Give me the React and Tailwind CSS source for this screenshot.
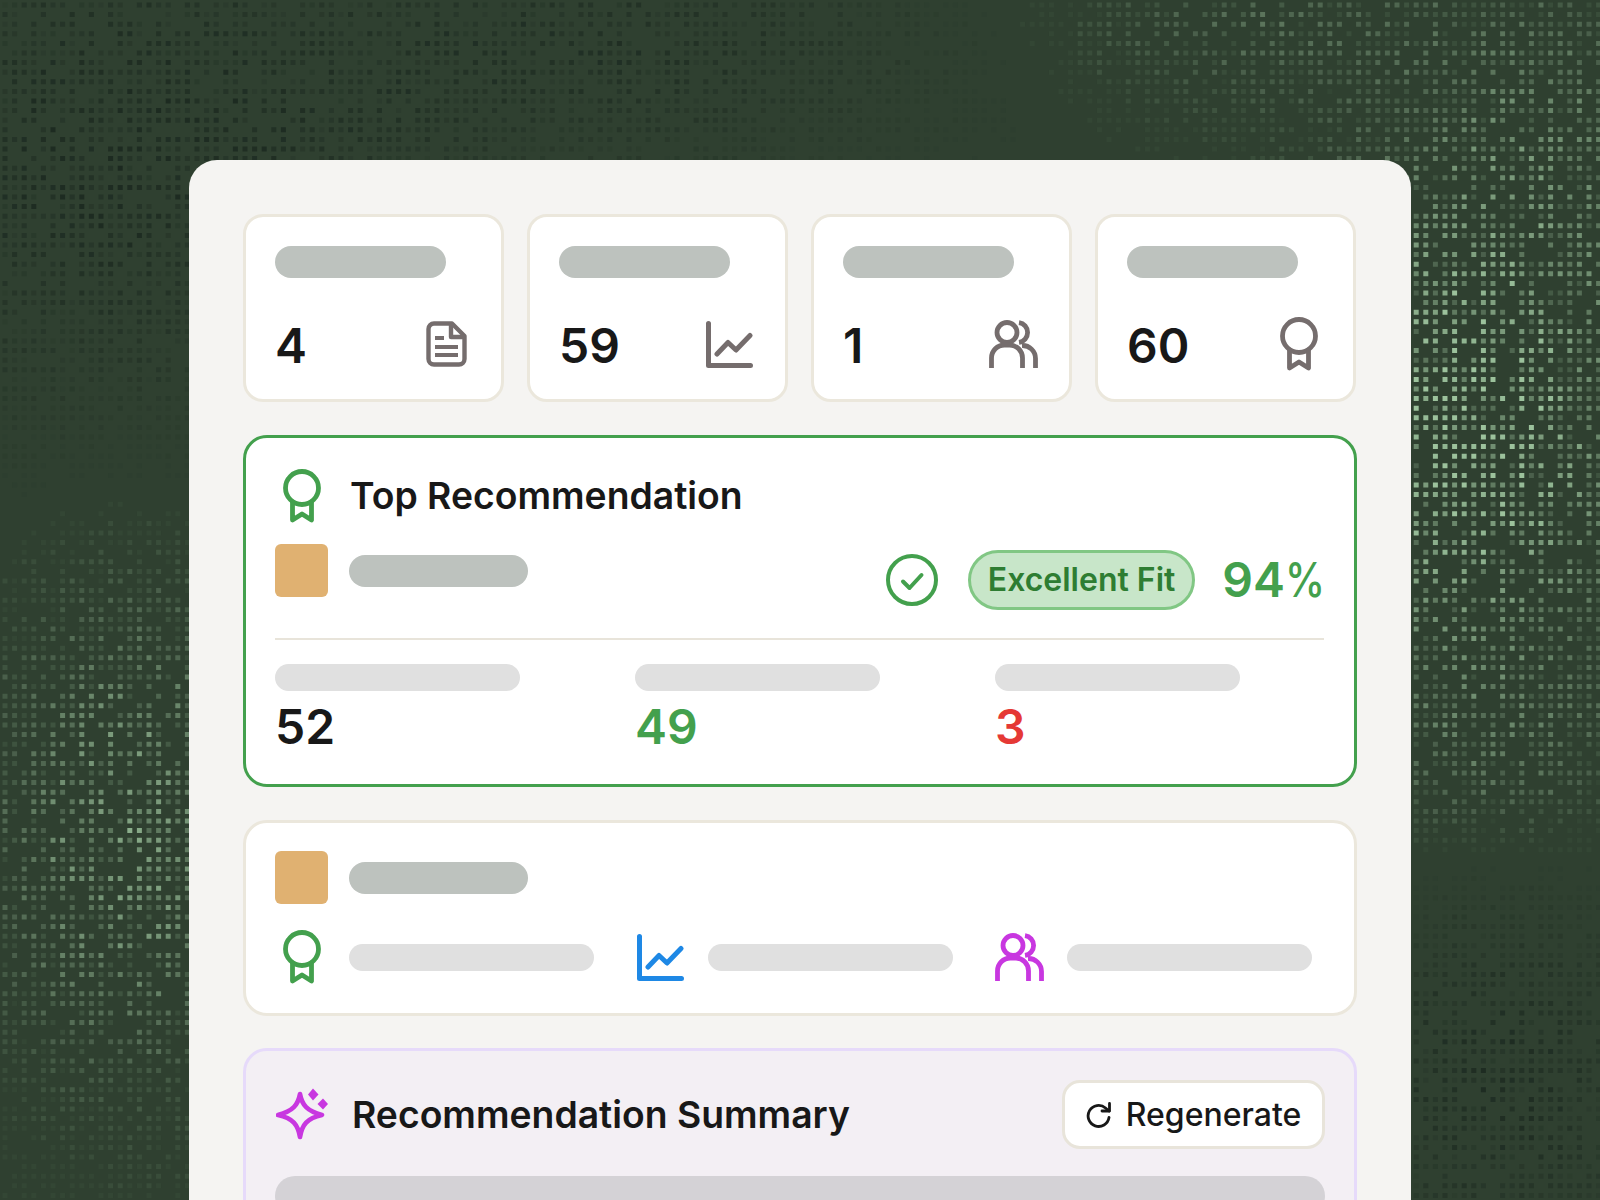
import { useMemo } from "react";

const ink = "text-[#181818]";
const fontInter = "font-['Inter',sans-serif]";

function rand(i, j) {
    const s = Math.sin(i * 127.1 + j * 311.7) * 43758.5453;
    return s - Math.floor(s);
}

// soft blob, 1 at the center and fading out
function blob(x, y, cx, cy, rx, ry) {
    const d = ((x - cx) / rx) ** 2 + ((y - cy) / ry) ** 2;
    return Math.exp(-d * 1.6);
}

// above 0 the dot is lighter than the ground, below 0 darker
function dotTone(x, y) {
    const light =
        blob(x, y, 130, 830, 170, 300) * 0.68 +
        blob(x, y, 1470, 430, 200, 330) * 1.0 +
        blob(x, y, 1240, 20, 280, 120) * 0.3 +
        blob(x, y, 1560, 120, 160, 200) * 0.3 +
        blob(x, y, 1500, 760, 200, 110) * 0.25;
    const dark =
        blob(x, y, 120, 160, 420, 300) * 0.6 +
        blob(x, y, 650, 50, 380, 130) * 0.42 +
        blob(x, y, 1500, 1080, 180, 230) * 0.55;
    return light - dark;
}

function DotField() {
    const groups = useMemo(() => {
        const buckets = {};
        for (let i = 0; i < 167; i++) {
            for (let j = 0; j < 125; j++) {
                const x = 5 + 9.6 * i;
                const y = 5 + 9.6 * j;
                // the card covers the middle
                if (x > 195 && x < 1405 && y > 165) continue;
                if (rand(j + 9, i + 3) < 0.25) continue;
                const tone = dotTone(x, y);
                const amount = Math.abs(tone) * (0.3 + rand(i, j) * 0.95);
                const level = Math.min(20, Math.round(amount * 20));
                if (level === 0) continue;
                const key = (tone > 0 ? "l" : "d") + level;
                buckets[key] = (buckets[key] || "") + `M${x - 2.5} ${y - 2.5}h5v5h-5z`;
            }
        }
        return Object.entries(buckets);
    }, []);

    return (
        <svg className="absolute inset-0" width="1600" height="1200" viewBox="0 0 1600 1200" aria-hidden="true">
            {groups.map(([key, d]) => {
                const level = Number(key.slice(1));
                const isLight = key[0] === "l";
                return (
                    <path
                        key={key}
                        d={d}
                        fill={isLight ? "#a8d0a8" : "#18241d"}
                        fillOpacity={isLight ? level * 0.045 : level * 0.055}
                    />
                );
            })}
        </svg>
    );
}

function AwardIcon({ className }) {
    return (
        <svg className={className} width="40" height="54" viewBox="0 0 40 54" fill="none" stroke="currentColor" strokeWidth="4.8" strokeLinecap="round" strokeLinejoin="round">
            <circle cx="20" cy="19" r="16.5" />
            <path d="M10.5 33v18l9.5-6 9.500 6V33" />
        </svg>
    );
}

function ChartIcon({ className }) {
    return (
        <svg className={className} width="47" height="47" viewBox="0 0 47 47" fill="none" stroke="currentColor" strokeWidth="5" strokeLinecap="round" strokeLinejoin="round">
            <path d="M2.5 2.5v42h42" />
            <path d="M11 33l11-11.5 8 7.5 14-14.5" />
        </svg>
    );
}

function UsersIcon({ className }) {
    return (
        <svg className={className} width="49" height="49" viewBox="0 0 49 49" fill="none" stroke="currentColor" strokeWidth="4.8">
            <circle cx="18" cy="12.5" r="10" />
            <path d="M30 2.6a10 10 0 0 1 0 19.8" />
            <path d="M2.5 48V38a13 13 0 0 1 13-13h5a13 13 0 0 1 13 13v10" />
            <path d="M33 25.5a13 13 0 0 1 13.5 13V48" />
        </svg>
    );
}

function DocIcon({ className }) {
    return (
        <svg className={className} width="41" height="46" viewBox="0 0 41 46" fill="none" stroke="currentColor" strokeWidth="4.4" strokeLinejoin="round">
            <path d="M8 2.500h18L38.500 15v23a5.500 5.500 0 0 1-5.500 5.500H8A5.500 5.500 0 0 1 2.500 38V8A5.500 5.500 0 0 1 8 2.500z" />
            <path d="M25 2.500V16h13.500" />
            <path d="M9 17h9M9 26h23M9 34h23" strokeWidth="4" />
        </svg>
    );
}

function SparkleIcon({ className }) {
    return (
        <svg className={className} width="52" height="54" viewBox="0 0 52 54" fill="none">
            <path
                d="M24 6c2 11 7 17 22 21-15 3-20 10-22 22-2-12-7-19-22-22 15-4 20-10 22-21z"
                stroke="currentColor"
                strokeWidth="4.6"
                strokeLinejoin="round"
            />
            <path d="M37 0.500l5.500 6-5.500 6-5-6z" fill="currentColor" />
            <path d="M47 10.500l5 5.500-5 5.500-5.500-5.500z" fill="currentColor" />
        </svg>
    );
}

function CheckCircleIcon({ className }) {
    return (
        <svg className={className} width="52" height="52" viewBox="0 0 52 52" fill="none" stroke="currentColor" strokeWidth="4" strokeLinecap="round" strokeLinejoin="round">
            <circle cx="26" cy="26" r="24" />
            <path d="M17 27.500l6.500 6.500 12-13" />
        </svg>
    );
}

function RefreshIcon({ className }) {
    return (
        <svg className={className} width="26" height="28" viewBox="0 0 26 28" fill="none" stroke="currentColor" strokeWidth="2.8" strokeLinecap="round" strokeLinejoin="round">
            <path d="M23 16.500A10.500 10.500 0 1 1 19.500 7L23 10" />
            <path d="M23.500 2.500V10h-7.500" />
        </svg>
    );
}

function StatCard({ value, icon }) {
    return (
        <div className="h-[188px] rounded-[20px] border-[3px] border-[#ebe7dc] bg-white px-[29px] pt-[29px]">
            <div className="h-8 w-[171px] rounded-full bg-[#bdc2be]" />
            <div className="mt-[36px] flex h-[60px] items-center justify-between">
                <span className={`pt-[4px] text-[48px] font-semibold leading-none ${ink}`}>{value}</span>
                {icon}
            </div>
        </div>
    );
}

function Metric({ value, color }) {
    return (
        <div>
            <div className="h-[27px] w-[245px] rounded-full bg-[#e0e0e0]" />
            <div className={`mt-[8px] text-[48px] font-semibold leading-[56px] ${color}`}>{value}</div>
        </div>
    );
}

function Swatch() {
    return <div className="h-[53px] w-[53px] shrink-0 rounded-[6px] bg-[#e0b171]" />;
}

function SkillRow({ icon, iconBox }) {
    return (
        <div className={`flex items-center ${iconBox}`}>
            {icon}
            <div className="h-[27px] w-[245px] rounded-full bg-[#e0e0e0]" />
        </div>
    );
}

export default function App() {
    return (
        <div className={`relative h-[1200px] overflow-hidden bg-[#2f4030] ${fontInter}`}>
            <DotField />
            <div className="relative ml-[189px] mt-[160px] h-[1100px] w-[1222px] rounded-[28px] bg-[#f5f4f2] px-[54px] pt-[54px]">
                <div className="grid grid-cols-[repeat(4,261px)] gap-[23px]">
                    <StatCard value="4" icon={<DocIcon className="mr-[5px] text-[#756d6d]" />} />
                    <StatCard value="59" icon={<ChartIcon className="mr-[3px] text-[#756d6d]" />} />
                    <StatCard value="1" icon={<UsersIcon className="mr-[2px] text-[#756d6d]" />} />
                    <StatCard value="60" icon={<AwardIcon className="mr-[5px] text-[#756d6d]" />} />
                </div>

                <section className="mt-[33px] h-[352px] rounded-[24px] border-[3px] border-[#43a04d] bg-white pl-[29px] pr-[30px] pt-[31px]">
                    <div className="flex items-center">
                        <AwardIcon className="ml-[7px] text-[#43a04d]" />
                        <h2 className={`ml-[28px] text-[37.3px] font-semibold leading-[54px] ${ink}`}>Top Recommendation</h2>
                    </div>
                    <div className="mt-[21px] flex h-[64px] items-start">
                        <Swatch />
                        <div className="ml-[21px] mt-[11px] h-[32px] w-[179px] rounded-full bg-[#bdc2be]" />
                        <div className="ml-auto mt-[6px] flex items-center">
                            <CheckCircleIcon className="text-[#43a04d]" />
                            <span className="ml-[30px] rounded-full border-[3px] border-[#81c784] bg-[#c8e6c9] px-[17px] text-[32px] font-semibold leading-[54px] text-[#2e7d32]">
                                Excellent Fit
                            </span>
                            <span className="ml-[27px] flex items-baseline text-[48px] font-semibold leading-none text-[#43a04d]">
                                94
                                <span className="inline-block w-[39px] origin-left scale-x-[0.84] font-medium">%</span>
                            </span>
                        </div>
                    </div>
                    <div className="mt-[30px] h-[2px] bg-[#e8e4da]" />
                    <div className="mt-[24px] grid grid-cols-[360px_360px_1fr]">
                        <Metric value="52" color={ink} />
                        <Metric value="49" color="text-[#43a04d]" />
                        <Metric value="3" color="text-[#e53935]" />
                    </div>
                </section>

                <section className="mt-[33px] h-[196px] rounded-[24px] border-[3px] border-[#ebe7dc] bg-white px-[29px] pt-[28px]">
                    <div className="flex items-center">
                        <Swatch />
                        <div className="ml-[21px] h-[32px] w-[179px] rounded-full bg-[#bdc2be]" />
                    </div>
                    <div className="mt-[26px] flex items-center">
                        <SkillRow iconBox="w-[360px]" icon={<AwardIcon className="ml-[7px] mr-[27px] text-[#43a04d]" />} />
                        <SkillRow iconBox="w-[360px]" icon={<ChartIcon className="ml-[2px] mr-[24px] text-[#1e88e5]" />} />
                        <SkillRow iconBox="" icon={<UsersIcon className="mr-[23px] text-[#c837e0]" />} />
                    </div>
                </section>

                <section className="mt-[32px] h-[400px] rounded-[24px] border-[3px] border-[#e6dafa] bg-[#f3eff4] px-[29px] pt-[29px]">
                    <div className="flex items-center justify-between">
                        <div className="flex items-center">
                            <SparkleIcon className="ml-[1px] text-[#c837e0]" />
                            <h2 className={`ml-[24px] text-[37.3px] font-semibold leading-[54px] ${ink}`}>Recommendation Summary</h2>
                        </div>
                        <button type="button" className={`flex h-[69px] w-[263px] items-center justify-center gap-[14px] rounded-[18px] border-[3px] border-[#e8e4da] bg-white text-[32px] font-medium ${ink}`}>
                            <RefreshIcon />
                            Regenerate
                        </button>
                    </div>
                    <div className="mt-[27px] h-[40px] rounded-full bg-[#d4d2d6]" />
                </section>
            </div>
        </div>
    );
}
